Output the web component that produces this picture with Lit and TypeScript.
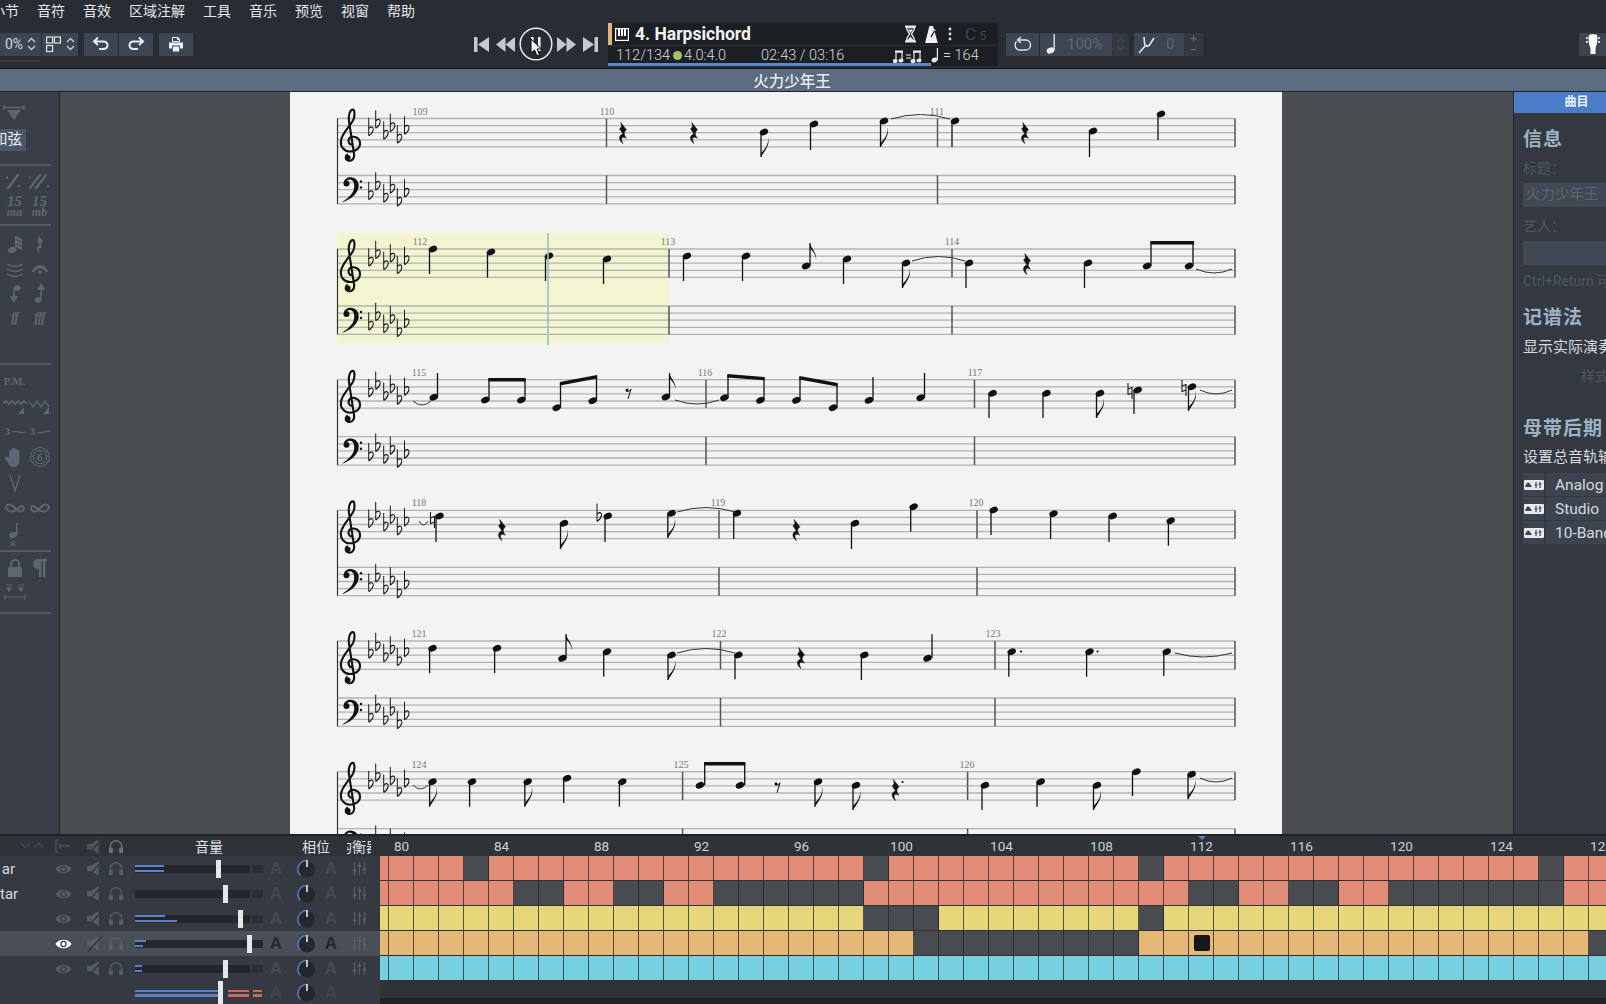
import { LitElement, html, css, svg } from "lit";
import { customElement } from "lit/decorators.js";

const UI_FONT = css`"Roboto", "Noto Sans CJK SC", sans-serif`;

// ---- score data, all in page pixels (the sheet svg has a matching viewBox) ----
// note: [headX, headY, stemX, stemEndY, 1 = flag]
type Note = [number, number, number, number, number?];
type Tie = [number, number, number, number];
interface System {
  top: number;
  labels: [string, number][];
  bars: number[];
  notes: Note[];
  rests?: [number, number][];
  rests8?: [number, number][];
  beams?: [number, number, number, number][];
  naturals?: [number, number][];
  flats?: [number, number][];
  dots?: [number, number][];
}

const SYSTEMS: System[] = [
  {
    top: 118.5,
    labels: [["109", 420], ["110", 607], ["111", 937]],
    bars: [606.5, 937.5],
    rests: [[623, 133], [694, 133], [1025, 133]],
    notes: [
      [764, 132, 761, 157, 1],
      [814, 124, 810.5, 150],
      [884, 121, 880.5, 147, 1],
      [955, 121, 952, 147],
      [1093, 131, 1089.5, 157],
      [1161, 114, 1158, 140],
    ],
  },
  {
    top: 249,
    labels: [["112", 420], ["113", 668], ["114", 952]],
    bars: [669, 952],
    rests: [[1027, 264]],
    beams: [[1151, 241, 1193.5, 241]],
    notes: [
      [433, 249, 429.5, 274],
      [491, 252, 487.5, 277.5],
      [549, 256, 545.5, 281],
      [607, 259, 603.5, 284],
      [687, 256, 683.5, 281],
      [746, 256, 742.5, 281],
      [806, 266, 810, 243, 1],
      [847, 259, 843.5, 284],
      [906, 263, 902.5, 288, 1],
      [969, 263, 966, 288],
      [1088, 263, 1084.5, 288],
      [1147, 266, 1151, 242],
      [1189, 266, 1193, 242],
    ],
  },
  {
    top: 379.7,
    labels: [["115", 419], ["116", 705], ["117", 975]],
    bars: [706, 974.5],
    rests8: [[629, 393]],
    beams: [
      [489, 378, 525, 378],
      [560.5, 382, 596.5, 375],
      [728, 374, 764, 377],
      [800, 376, 837, 383],
    ],
    naturals: [[1130, 391], [1184, 388]],
    notes: [
      [433.7, 397.3, 437.5, 373],
      [485.3, 400, 489, 379],
      [521.3, 400, 525, 379],
      [556.7, 407.7, 560.5, 383],
      [592.7, 400.7, 596.5, 376],
      [665.8, 397, 669.5, 373, 1],
      [724.4, 397.7, 728, 375],
      [760.4, 400.3, 764, 378],
      [796.4, 400.3, 800, 377],
      [833, 407.7, 837, 384],
      [869, 400.3, 873, 377],
      [920.6, 397.7, 924.5, 373],
      [992.6, 393.3, 989, 418],
      [1046.5, 393.3, 1043, 418],
      [1100, 393.3, 1096.5, 418, 1],
      [1137.7, 390, 1134, 414],
      [1192, 386.7, 1188.5, 411, 1],
    ],
  },
  {
    top: 510.3,
    labels: [["118", 419], ["119", 718], ["120", 976]],
    bars: [719, 977],
    rests: [[502, 530], [796.4, 530]],
    naturals: [[432.5, 520]],
    flats: [[599, 516.7]],
    notes: [
      [439.5, 516, 436, 542],
      [564, 523.3, 560.5, 549, 1],
      [607.8, 516, 605, 542],
      [671.6, 513.3, 667.8, 538, 1],
      [737, 513.3, 733.7, 539],
      [855, 523.3, 851.5, 549],
      [913.6, 506.7, 910.7, 531.7],
      [993.7, 510, 991, 535],
      [1053.5, 513.7, 1050.6, 539],
      [1112.7, 516, 1109, 542],
      [1170.7, 520.7, 1168.4, 545.7],
    ],
  },
  {
    top: 641,
    labels: [["121", 419], ["122", 719], ["123", 993]],
    bars: [720.5, 995],
    rests: [[801, 658]],
    dots: [[1021, 651.5], [1097.6, 651.5]],
    notes: [
      [432.5, 648.3, 429.6, 673],
      [497, 648.3, 494.6, 673],
      [562.5, 658.3, 566, 634, 1],
      [607, 651.7, 603.7, 676.7],
      [671.6, 655, 668, 680, 1],
      [738.4, 655, 735, 679.3],
      [864.3, 655, 861.4, 680],
      [927.5, 658.3, 932, 634.3],
      [1011.7, 651.7, 1008.8, 676.7],
      [1089.5, 651.7, 1086.6, 676.7],
      [1166.7, 651.7, 1163.8, 676],
    ],
  },
  {
    top: 771.7,
    labels: [["124", 419], ["125", 681], ["126", 967]],
    bars: [682.6, 967.6],
    rests: [[895.6, 790]],
    rests8: [[778, 786.7]],
    dots: [[902.6, 782]],
    beams: [[704.7, 762, 744.7, 762]],
    notes: [
      [432.5, 781.7, 429.6, 806.7, 1],
      [472, 781.7, 469.6, 806.7],
      [527.7, 781.7, 524.8, 806.7, 1],
      [567, 778.3, 563.7, 803],
      [622.3, 781.7, 619.4, 806.7],
      [700, 785.3, 704.7, 763],
      [740, 785.3, 744.7, 763],
      [818, 781.7, 815, 806.7, 1],
      [856, 785.3, 853, 810, 1],
      [985, 785.3, 982, 810],
      [1040.7, 781.7, 1037, 806.7],
      [1097, 785.3, 1093.5, 810, 1],
      [1136.5, 771.7, 1132.5, 796],
      [1191.7, 774.3, 1188, 799.3, 1],
    ],
  },
];

// ties that arch over the staff / ties that sag under it
const ARCHES: Tie[] = [
  [891, 119, 950, 119],
  [912, 261, 965, 261],
  [677, 512, 735, 512],
  [677, 653, 735, 653],
];
const SAGS: Tie[] = [
  [1196, 269, 1232, 269],
  [413, 401, 431, 401],
  [675, 400, 719, 400],
  [1200, 390, 1232, 390],
  [419, 521, 428, 521],
  [1175, 653, 1232, 653],
  [413, 785, 428, 785],
  [1200, 778, 1232, 778],
];

const KEY_X = [370.7, 377.7, 385.7, 392.3, 399.3, 406.5];
const TREBLE_KEY = [12.5, 5, 16, 8.5, 20, 11];
const BASS_KEY = [19.5, 10, 22, 13, 26, 17];

const flat = (x: number, y: number) => svg`
  <path transform="translate(${x} ${y}) scale(1 1.2)" d="M-2-11V4M-2-2C0-4.500 3-3.500 2.500-1C2 1 0 3-2 4"
    fill="none" stroke="#1a1a1a" stroke-width="1"/>`;

const natural = (x: number, y: number) => svg`
  <path d="M${x - 2} ${y - 8}V${y + 4}M${x + 2} ${y - 4}V${y + 8}M${x - 2} ${y - 2}L${x + 2} ${y - 3.5}M${x - 2} ${y + 3.5}L${x + 2} ${y + 2}"
    fill="none" stroke="#1a1a1a" stroke-width="1.1"/>`;

const trebleClef = (x: number, y: number) => svg`
  <g transform="translate(${x} ${y})" fill="none" stroke="#111" stroke-width="2.1">
    <path d="M2 5C-2 6-4 1-1-2C3-4 9-2 9 4C9 10 3 12-1 12C-7 12-11 7-10 1C-9-6-2-12 2-19C4-23 4-29 2-30C-1-30-3-24-2-18L3 14C4 20 0 22-3 21C-6 20-6 16-3 15"/>
    <circle cx="-3" cy="18" r="2.6" fill="#111" stroke="none"/>
  </g>`;

const bassClef = (x: number, y: number) => svg`
  <g transform="translate(${x} ${y})" fill="#111">
    <path d="M3 7C3 3 8 1 11 2C17 3 19 9 17 14C14 21 7 25 1 27C6 23 12 19 13 13C14 8 12 4 9 4C7 4 5 5 5 7Z"/>
    <circle cx="5.5" cy="8" r="3"/>
    <circle cx="20" cy="6" r="1.2"/>
    <circle cx="20" cy="12" r="1.2"/>
  </g>`;

const rest = (x: number, y: number) => svg`
  <path transform="translate(${x} ${y}) scale(1.15 1.05)" fill="#111" stroke="#111" stroke-width=".5"
    d="M-2-10L3-3C1-1 0 1 3 5C0 3-3 4 0 10C-4 7-4 2 0 1L-3-4C-1-5-1-7-2-10Z"/>`;

const rest8 = (x: number, y: number) => svg`
  <g transform="translate(${x} ${y})">
    <circle cx="-2" cy="-3" r="1.5" fill="#111"/>
    <path d="M-3-2C-1-1 1-2 2-4L-1 6" fill="none" stroke="#111" stroke-width="1"/>
  </g>`;

const noteShape = ([hx, hy, sx, end, mark]: Note) => {
  const up = end < hy;
  const flag =
    mark !== 1
      ? null
      : up
        ? svg`<path fill="#111" d="M${sx} ${end}C${sx + 1} ${end + 6} ${sx + 7} ${end + 9} ${sx + 6} ${end + 17}C${sx + 6} ${end + 11} ${sx + 2} ${end + 8} ${sx} ${end + 5}Z"/>`
        : svg`<path fill="#111" d="M${sx} ${end}C${sx + 5} ${end - 8} ${sx + 9} ${end - 12} ${sx + 7} ${end - 20}C${sx + 8} ${end - 13} ${sx + 4} ${end - 8} ${sx} ${end - 4}Z"/>`;
  return svg`
    <ellipse cx=${hx} cy=${hy} rx="4.4" ry="3.1" fill="#111" transform="rotate(-25 ${hx} ${hy})"/>
    <line x1=${sx} y1=${hy} x2=${sx} y2=${end} stroke="#111" stroke-width="1.3"/>
    ${flag}`;
};

@customElement("score-sheet")
class ScoreSheet extends LitElement {
  static override styles = css`
    :host {
      display: block;
      width: 992px;
      height: 100%;
      background: #f3f3f3;
      overflow: hidden;
    }
    svg {
      display: block;
    }
    text {
      font: 10px "Liberation Serif", serif;
      fill: #777;
      text-anchor: middle;
    }
  `;

  private staff(top: number, bars: number[]) {
    const lines = [0, 1, 2, 3, 4].map(
      (i) => svg`<line x1="337" x2="1235" y1=${top + i * 7.1} y2=${top + i * 7.1} stroke="#b2b2b2" stroke-width="1.3"/>`
    );
    const bottom = top + 28.4;
    return svg`${lines}
      ${[...bars, 1235].map(
        (x) => svg`<line x1=${x} x2=${x} y1=${top} y2=${bottom} stroke="#555" stroke-width="1.5"/>`
      )}`;
  }

  private system(s: System) {
    const bass = s.top + 57;
    return svg`
      ${this.staff(s.top, s.bars)}
      ${this.staff(bass, s.bars)}
      <line x1="337.5" x2="337.5" y1=${s.top} y2=${bass + 28.4} stroke="#333" stroke-width="1.2"/>
      ${trebleClef(351, s.top + 21)}
      ${bassClef(341, bass)}
      ${KEY_X.map((x, i) => flat(x, s.top + TREBLE_KEY[i]))}
      ${KEY_X.map((x, i) => flat(x, bass + BASS_KEY[i]))}
      ${s.labels.map(([t, x]) => svg`<text x=${x} y=${s.top - 4}>${t}</text>`)}
      ${s.notes.map(noteShape)}
      ${(s.rests ?? []).map(([x, y]) => rest(x, y))}
      ${(s.rests8 ?? []).map(([x, y]) => rest8(x, y))}
      ${(s.naturals ?? []).map(([x, y]) => natural(x, y))}
      ${(s.flats ?? []).map(([x, y]) => flat(x, y))}
      ${(s.dots ?? []).map(([x, y]) => svg`<circle cx=${x} cy=${y} r="1.1" fill="#111"/>`)}
      ${(s.beams ?? []).map(
        ([x1, y1, x2, y2]) =>
          svg`<polygon points="${x1 - 0.6},${y1} ${x2 + 0.6},${y2} ${x2 + 0.6},${y2 + 3.4} ${x1 - 0.6},${y1 + 3.4}" fill="#111"/>`
      )}`;
  }

  override render() {
    return html`<svg width="992" height="742" viewBox="290 92 992 742">
      <rect x="337" y="233" width="332" height="110" fill="#f2f5d0"/>
      ${SYSTEMS.map((s) => this.system(s))}
      ${ARCHES.map(([a, b, c, d]) => svg`<path d="M${a} ${b}Q${(a + c) / 2} ${b - 9} ${c} ${d}" fill="none" stroke="#333" stroke-width="1"/>`)}
      ${SAGS.map(([a, b, c, d]) => svg`<path d="M${a} ${b}Q${(a + c) / 2} ${b + 8} ${c} ${d}" fill="none" stroke="#333" stroke-width="1"/>`)}
      <rect x="547.2" y="233" width="1.6" height="112" fill="#8fc3d0"/>
    </svg>`;
  }
}

// ---- track mixer and pattern grid ----
const FIRST_BAR = 79;
const LAST_BAR = 128;
const range = (a: number, b: number) => Array.from({ length: b - a + 1 }, (_, i) => a + i);
const TRACK_GAPS: number[][] = [
  [83, 99, 110, 126],
  [85, 86, 89, 90, ...range(93, 98), 112, 113, 116, 117, ...range(120, 126)],
  [99, 100, 101, 110],
  [...range(101, 109), 128],
  [],
];
const TRACK_CLASS = ["salmon", "salmon", "yellow", "orange", "cyan"];

interface Track {
  name: string;
  l1: number;
  l2: number;
  handle: number;
}
const TRACKS: Track[] = [
  { name: "ar", l1: 29, l2: 29, handle: 83 },
  { name: "tar", l1: 0, l2: 0, handle: 90 },
  { name: "", l1: 30, l2: 42, handle: 105 },
  { name: "", l1: 11, l2: 8, handle: 114 },
  { name: "", l1: 7, l2: 7, handle: 90 },
];

const eyeIcon = svg`<svg viewBox="0 0 18 12" width="17" height="12"><path d="M0.5 6C4 0 14 0 17.5 6C14 12 4 12 0.5 6Z" fill="currentColor"/><circle cx="9" cy="6" r="3.4" fill="#3a3e45"/><circle cx="9" cy="6" r="2" fill="currentColor"/></svg>`;
const muteIcon = svg`<svg viewBox="0 0 16 16" width="17" height="17"><path d="M1 5.500H5L12 1V15L5 10.500H1Z" fill="currentColor"/><path d="M2 15.500L15 1" stroke="#33373e" stroke-width="1.300"/></svg>`;
const phonesIcon = svg`<svg viewBox="0 0 18 16" width="16" height="15"><path d="M2.500 11V8A6.500 6.500 0 0 1 15.500 8V11" fill="none" stroke="currentColor" stroke-width="1.500"/><rect x="1" y="9" width="4.500" height="6.500" rx="1.500" fill="currentColor"/><rect x="12.500" y="9" width="4.500" height="6.500" rx="1.500" fill="currentColor"/></svg>`;
const knobIcon = svg`<svg viewBox="0 0 20 20" width="20" height="20"><circle cx="10" cy="10.500" r="8" fill="#24272c"/><path d="M3.200 16.500A9 9 0 0 1 10 1.500" fill="none" stroke="#4f76b8" stroke-width="1.600"/><line x1="10" y1="1" x2="10" y2="8" stroke="#e8e8e8" stroke-width="1.600"/></svg>`;
const eqIcon = svg`<svg viewBox="0 0 16 16" width="15" height="15" fill="currentColor"><rect x="2" y="1" width="1.400" height="14"/><rect x="7.300" y="1" width="1.400" height="14"/><rect x="12.600" y="1" width="1.400" height="14"/><rect x="0.800" y="9" width="3.800" height="2.200"/><rect x="6.100" y="4" width="3.800" height="2.200"/><rect x="11.400" y="8" width="3.800" height="2.200"/></svg>`;

@customElement("track-mixer")
class TrackMixer extends LitElement {
  static override styles = css`
    :host {
      display: flex;
      height: 170px;
      background: #2f3237;
      border-top: 2px solid #1f2226;
      box-sizing: border-box;
      font-family: ${UI_FONT};
      overflow: hidden;
    }
    .mixer {
      width: 380px;
      flex: none;
      background: #353941;
    }
    .row {
      display: flex;
      align-items: center;
      height: 25px;
      color: #565c65;
    }
    .row > * {
      flex: none;
    }
    .header {
      height: 20px;
      background: #2f3237;
      color: #4d535b;
    }
    .selected {
      background: #4a4f57;
    }
    .master {
      height: 24px;
    }
    .name {
      width: 15px;
      margin-right: 35px;
      font-size: 15px;
      color: #d9dce0;
      text-align: right;
      white-space: nowrap;
    }
    .eye,
    .mute,
    .phones,
    .pan,
    .a1,
    .a2,
    .eq {
      display: flex;
      align-items: center;
      justify-content: center;
    }
    .eye {
      width: 26px;
    }
    .selected .eye {
      color: #fff;
    }
    .selected .mute,
    .selected .phones,
    .selected .eq {
      color: #5a6067;
    }
    .mute {
      width: 20px;
      margin-left: 8px;
    }
    .phones {
      width: 20px;
      margin-left: 2px;
    }
    .vol {
      position: relative;
      width: 128px;
      height: 8px;
      margin-left: 9px;
      background: linear-gradient(
        to right,
        #24272c 0 115px,
        transparent 115px 117px,
        #2b2e34 117px
      );
    }
    .selected .vol {
      background: #24272c;
    }
    .vol.bare {
      background: none;
    }
    .lvl {
      position: absolute;
      left: 0;
      height: 2.4px;
      background: #5a82c6;
    }
    .lvl.t {
      top: 0.5px;
    }
    .lvl.b {
      bottom: 0.5px;
    }
    .lvl.red {
      background: #c8695c;
    }
    .handle {
      position: absolute;
      top: -5px;
      width: 5px;
      height: 18px;
      margin-left: -2.5px;
      background: #e4e6e9;
    }
    .a1,
    .a2 {
      width: 26px;
      font: 700 17px "Liberation Sans", sans-serif;
      color: #454a52;
    }
    .a2 {
      width: 20px;
      margin-left: 4px;
    }
    .selected .a1,
    .selected .a2 {
      color: #24272c;
    }
    .master .a1,
    .master .a2 {
      color: #3f444c;
    }
    .pan {
      width: 20px;
      margin-left: 8px;
    }
    .eq {
      width: 20px;
      margin-left: 8px;
    }
    .header span {
      font-size: 14px;
      color: #dfe2e6;
      text-align: center;
      white-space: nowrap;
    }
    .h-vol {
      width: 128px;
      margin-left: 9px;
      margin-right: 26px;
      padding-left: 20px;
      box-sizing: border-box;
    }
    .h-pan {
      width: 44px;
      margin-left: 5px;
    }
    .h-eq {
      width: 24px;
      margin-left: 9px;
      overflow: hidden;
      display: flex;
      justify-content: center;
    }
    .h-eq span {
      flex: none;
    }
    .h-arrows {
      width: 50px;
      padding-left: 20px;
      box-sizing: border-box;
      display: flex;
    }
    .grid {
      flex: 1;
      overflow: hidden;
      position: relative;
    }
    .ruler,
    .track {
      display: flex;
    }
    .ruler {
      height: 20px;
      align-items: center;
      font-size: 13.5px;
      color: #cfd2d6;
    }
    .tick {
      flex: none;
      width: 25px;
      text-align: center;
    }
    .tick.first,
    .cell.first {
      width: 9px;
    }
    .track {
      height: 24px;
      margin-bottom: 1px;
    }
    .cell {
      flex: none;
      width: 25px;
      height: 24px;
      box-sizing: border-box;
      border-right: 1px solid rgba(30, 30, 36, 0.72);
    }
    .salmon {
      background: #e28d78;
    }
    .yellow {
      background: #e6d77b;
    }
    .orange {
      background: #e6b878;
    }
    .cyan {
      background: #76d0e0;
    }
    .gap {
      background: #484b50;
    }
    .playhead {
      position: absolute;
      left: 814px;
      top: 99px;
      width: 16px;
      height: 16px;
      border-radius: 2px;
      background: #171717;
    }
    .marker {
      position: absolute;
      left: 818px;
      top: 0;
      border: 4px solid transparent;
      border-top: 4px solid #5a82c6;
      border-bottom: 0;
    }
    .scroll {
      position: absolute;
      left: 0;
      right: 0;
      bottom: 0;
      height: 6px;
      background: #202327;
    }
  `;

  private trackRow(t: Track, i: number) {
    return html`<div class="row ${i === 3 ? "selected" : ""}">
      <div class="name">${t.name}</div>
      <div class="eye">${eyeIcon}</div>
      <div class="mute">${muteIcon}</div>
      <div class="phones">${phonesIcon}</div>
      <div class="vol">
        ${t.l1 ? html`<div class="lvl t" style="width:${t.l1}px"></div>` : ""}
        ${t.l2 ? html`<div class="lvl b" style="width:${t.l2}px"></div>` : ""}
        <div class="handle" style="left:${t.handle}px"></div>
      </div>
      <div class="a1">A</div>
      <div class="pan">${knobIcon}</div>
      <div class="a2">A</div>
      <div class="eq">${eqIcon}</div>
    </div>`;
  }

  override render() {
    const bars = range(FIRST_BAR, LAST_BAR);
    return html`
      <div class="mixer">
        <div class="row header">
          <div class="h-arrows">
            <svg width="24" height="10" viewBox="0 0 24 10" fill="none" stroke="#42474e" stroke-width="1.500"><path d="M1 2L5.500 7L10 2M14 7L18.500 2L23 7"/></svg>
          </div>
          <div class="eye">
            <svg width="16" height="14" viewBox="0 0 16 14" fill="none" stroke="#4d535b" stroke-width="1.300"><path d="M3 1H1V13H3M5 7H15M5 4V10"/></svg>
          </div>
          <div class="mute">${muteIcon}</div>
          <div class="phones" style="color:#6b727b">${phonesIcon}</div>
          <span class="h-vol">音量</span>
          <span class="h-pan">相位</span>
          <div class="h-eq"><span>均衡器</span></div>
        </div>
        ${TRACKS.map((t, i) => this.trackRow(t, i))}
        <div class="row master">
          <div class="name"></div>
          <div class="eye"></div>
          <div class="mute"></div>
          <div class="phones"></div>
          <div class="vol bare">
            <div class="lvl t" style="width:85px"></div>
            <div class="lvl b" style="width:85px"></div>
            <div class="lvl t red" style="left:93px;width:21px"></div>
            <div class="lvl b red" style="left:93px;width:21px"></div>
            <div class="lvl t red" style="left:118px;width:9px"></div>
            <div class="lvl b red" style="left:118px;width:9px"></div>
            <div class="handle" style="left:85px;top:-8px;height:24px"></div>
          </div>
          <div class="a1">A</div>
          <div class="pan">${knobIcon}</div>
          <div class="a2">A</div>
        </div>
      </div>
      <div class="grid">
        <div class="ruler">
          ${bars.map(
            (b) => html`<div class="tick ${b === FIRST_BAR ? "first" : ""}">${b % 4 === 0 ? b : ""}</div>`
          )}
        </div>
        ${TRACK_GAPS.map(
          (gaps, t) => html`<div class="track">
            ${bars.map(
              (b) => html`<div class="cell ${b === FIRST_BAR ? "first" : ""} ${gaps.includes(b) ? "gap" : TRACK_CLASS[t]}"></div>`
            )}
          </div>`
        )}
        <div class="marker"></div>
        <div class="playhead"></div>
        <div class="scroll"></div>
      </div>
    `;
  }
}

// ---- left tool palette icons ----
const tool = (body: unknown) => svg`<svg viewBox="0 0 24 24" width="24" height="24" fill="currentColor" stroke="none">${body}</svg>`;
const noteGlyph = (extra: unknown = null) => svg`<ellipse cx="9" cy="18" rx="4" ry="3" transform="rotate(-20 9 18)"/><rect x="12" y="4" width="1.500" height="14"/>${extra}`;
const tripletMark = svg`<text x="2" y="15" font-family="Liberation Serif, serif" font-size="10" font-weight="700">3</text>`;

const TOOLS_A = [
  tool(svg`<path d="M5 18L15 5M4 7.500h.01M16 16h.01" stroke="currentColor" stroke-width="2.400" stroke-linecap="round"/>`),
  tool(svg`<path d="M2 18L12 5M8 18L18 5M2 7.500h.01M20 16h.01" stroke="currentColor" stroke-width="2.200" stroke-linecap="round"/>`),
];
const TOOLS_B = [
  tool(noteGlyph(svg`<path d="M13 4L19 7V10L13 7ZM13 8L19 11V14L13 11ZM13 12L19 15V18L13 15Z"/>`)),
  tool(svg`<g transform="translate(12 12) scale(.95)"><path d="M-2-10L3-3C1-1 0 1 3 5C0 3-3 4 0 10C-4 7-4 2 0 1L-3-4C-1-5-1-7-2-10Z"/></g>`),
  tool(svg`<path d="M4 7Q12 12 20 7M4 12Q12 17 20 12M4 17Q12 22 20 17" fill="none" stroke="currentColor" stroke-width="1.300"/>`),
  tool(svg`<path d="M4 15C6 6 18 6 20 15L18 15C15 10 9 10 6 15Z"/><circle cx="12" cy="15" r="1.800"/>`),
  tool(svg`<ellipse cx="14" cy="7" rx="3.500" ry="2.800"/><path d="M11 7V18" stroke="currentColor" stroke-width="1.500"/><path d="M7 15L11 22L15 15Z"/>`),
  tool(svg`<ellipse cx="10" cy="19" rx="3.500" ry="2.800"/><path d="M13 19V8" stroke="currentColor" stroke-width="1.500"/><path d="M9 9L13 2L17 9Z"/>`),
];
const TOOLS_C_WAVE = [
  tool(svg`<path d="M0 9L3 7L6 10L9 7L12 10L15 7L18 10L21 7L24 10" fill="none" stroke="currentColor" stroke-width="1.600"/><path d="M15 20L21 13V20Z"/>`),
  tool(svg`<path d="M1 7L5 13L9 7L13 13L17 7L21 13" fill="none" stroke="currentColor" stroke-width="1.300"/><path d="M15 20L21 13V20Z"/>`),
  tool(svg`${tripletMark}<path d="M9 12C13 10 17 14 23 12" fill="none" stroke="currentColor" stroke-width="1.200"/>`),
  tool(svg`${tripletMark}<path d="M9 13C13 14 18 10 23 11" fill="none" stroke="currentColor" stroke-width="1.200"/>`),
];
const handIcon = tool(svg`<path d="M6 11V6a1.300 1.300 0 0 1 2.600 0V10V4a1.300 1.300 0 0 1 2.600 0V10V4.500a1.300 1.300 0 0 1 2.600 0V10V6a1.300 1.300 0 0 1 2.600 0V16C16.400 20 14 22 11 22C8 22 6 20 5 18L2 13C2 11 4 11 5 13Z"/>`);
const ringIcon = tool(svg`<circle cx="12" cy="12" r="9.500" fill="none" stroke="currentColor" stroke-width="1.100"/><circle cx="12" cy="12" r="6.800" fill="none" stroke="currentColor" stroke-width="1"/><path d="M14 9C10 8.500 9.500 13 10 14.500C11 16 14 15.500 14 13.500C14 11.500 11 11.500 10 13.500" fill="none" stroke="currentColor" stroke-width="1.100"/>`);
const vIcon = tool(svg`<path d="M7 4L12 20L17 4" fill="none" stroke="currentColor" stroke-width="1.400"/>`);
const turn = tool(svg`<path d="M3 11C5 7 8 8 12 12C16 16 19 17 21 13C21 10 19 9 17 11C13 15 10 17 6 15C4 14 3 13 3 11Z" fill="none" stroke="currentColor" stroke-width="1.800"/>`);
const turnRev = tool(svg`<g transform="matrix(-1 0 0 1 24 0)"><path d="M3 11C5 7 8 8 12 12C16 16 19 17 21 13C21 10 19 9 17 11C13 15 10 17 6 15C4 14 3 13 3 11Z" fill="none" stroke="currentColor" stroke-width="1.800"/></g>`);
const graceIcon = tool(svg`<ellipse cx="10" cy="13" rx="4" ry="3" transform="rotate(-20 10 13)"/><rect x="13" y="1" width="1.500" height="12"/><path d="M7 20L13 24M13 20L7 24M10 18.500V24" stroke="currentColor" stroke-width="1"/>`);
const lockIcon = tool(svg`<path d="M8 11V8a4 4 0 0 1 8 0V11" fill="none" stroke="currentColor" stroke-width="2"/><rect x="5" y="11" width="14" height="10" rx="1"/>`);
const pilcrowIcon = tool(svg`<path d="M10 3H19V5.500H17.500V21H15V5.500H13.500V21H11V13C6.500 13 5 10.500 5 8C5 5 7 3 10 3Z"/>`);
const staffIcon = tool(svg`<path d="M3 5H9M15 5H21M4 8H8L6 11ZM16 8H20L18 11ZM2 14V20M22 14V20M2 17H22" stroke="currentColor" stroke-width="1.100"/>`);

const UNDO = svg`<svg width="18" height="16" viewBox="0 0 18 16" fill="none" stroke="#e8eaed" stroke-width="2"><path d="M6 1.500L2 5.500L6 9M2 5.500H11C17 5.500 17 13 11 13H7"/></svg>`;
const REDO = svg`<svg width="18" height="16" viewBox="0 0 18 16" fill="none" stroke="#e8eaed" stroke-width="2"><path d="M12 1.500L16 5.500L12 9M16 5.500H7C1 5.500 1 13 7 13H11"/></svg>`;
const PRINT = svg`<svg width="16" height="15" viewBox="0 0 16 15" fill="#f0f1f3"><path d="M4 0H10L12 2V5H4ZM5 1V4H11V3H9V1Z" fill-rule="evenodd"/><path d="M1 5.500H15V11.500H12V8.500H4V11.500H1Z"/><rect x="4.800" y="9.500" width="6.400" height="5"/></svg>`;
const updown = (color: string) => svg`<svg width="9" height="14" viewBox="0 0 9 14" fill="none" stroke=${color} stroke-width="1.300"><path d="M1 5L4.500 1.500L8 5M1 9L4.500 12.500L8 9"/></svg>`;
const LOOP = svg`<svg width="20" height="16" viewBox="0 0 20 16" fill="none" stroke="#dfe2e6" stroke-width="1.400"><path d="M8 1L4.500 4L8 7M4.500 4H13C19 4 19 14 13 14H7C2 14 1 8 3.500 5.500"/></svg>`;
const NOTE_WHITE = svg`<svg width="12" height="20" viewBox="0 0 12 20" fill="#eceef0"><ellipse cx="4.500" cy="16.500" rx="4" ry="3" transform="rotate(-20 4.500 16.500)"/><rect x="7.500" y="0" width="1.300" height="16"/></svg>`;
const FORK = svg`<svg width="18" height="20" viewBox="0 0 18 20" fill="none" stroke="#e4e6e9" stroke-width="1.600"><path d="M1 19L8 11M6 3L6.500 9C6.500 12 10 13 11.500 11L16 4"/></svg>`;
const GUITAR = svg`<svg width="16" height="20" viewBox="0 0 16 20" fill="#fff"><path d="M4 1C6 0 10 0 12 1C13 5 12 11 10.500 14V20H5.500V14C4 11 3 5 4 1Z"/><path d="M1 4h2M1 8h2M13 4h2M13 8h2" stroke="#fff" stroke-width="1.500"/></svg>`;
const PIANO = svg`<svg width="14" height="13" viewBox="0 0 14 13"><rect x=".6" y=".6" width="12.800" height="11.800" fill="none" stroke="#fff" stroke-width="1.200"/><path d="M3 1V8H5V1ZM6 1V8H8V1ZM9 1V8H11V1Z" fill="#fff"/></svg>`;
const HOURGLASS = svg`<svg width="13" height="18" viewBox="0 0 13 17"><path d="M1 1H12M1 16H12" stroke="#e8eaed" stroke-width="1.800"/><path d="M2.500 2H10.500C10.500 5 8 7 7.500 8.500C8 10 10.500 12 10.500 15H2.500C2.500 12 5 10 5.500 8.500C5 7 2.500 5 2.500 2Z" fill="none" stroke="#e8eaed" stroke-width="1.300"/><path d="M4 4H9L6.500 7.500ZM3.800 14.500L6.500 11L9.200 14.500Z" fill="#e8eaed"/></svg>`;
const METRONOME = svg`<svg width="16" height="19" viewBox="0 0 15 18" fill="#f0f1f3"><path d="M5 1H8.500L13 17H1ZM7 12L11 4.500L10 4L6.200 11Z" fill-rule="evenodd"/></svg>`;
const DOTS = svg`<svg width="4" height="14" viewBox="0 0 4 14" fill="#dfe2e6"><circle cx="2" cy="2" r="1.400"/><circle cx="2" cy="7" r="1.400"/><circle cx="2" cy="12" r="1.400"/></svg>`;
const SWING = svg`<svg width="30" height="14" viewBox="0 0 30 14" fill="none" stroke="#e8eaed" stroke-width="1.200"><path d="M3 12V3H9V11M21 12V3H27V11"/><path d="M2 2.500H10M20 2.500H28" stroke-width="2"/><ellipse cx="2" cy="12" rx="2" ry="1.500" fill="#e8eaed"/><ellipse cx="8" cy="11.500" rx="2" ry="1.500" fill="#e8eaed"/><ellipse cx="20" cy="12" rx="2" ry="1.500" fill="#e8eaed"/><ellipse cx="26" cy="11.500" rx="2" ry="1.500" fill="#e8eaed"/><path d="M13 6H18M13 9H18" stroke-width="1"/></svg>`;
const TEMPO_NOTE = svg`<svg width="10" height="15" viewBox="0 0 10 15" fill="#eceef0"><ellipse cx="3.500" cy="12" rx="3" ry="2.300" transform="rotate(-20 3.500 12)"/><rect x="5.800" y="0" width="1.200" height="12"/></svg>`;
const FX_ICON = svg`<svg width="20" height="12" viewBox="0 0 20 12"><rect width="20" height="10" y="1" fill="#e8eaed" rx="1"/><path d="M1 8C3 2 5 2 8 8Z" fill="#3d444f"/><path d="M12 3V9M16 3V9" stroke="#3d444f" stroke-width="1.200"/><path d="M10.500 6H13.500M14.500 5H17.500" stroke="#3d444f"/></svg>`;
const TRANSPORT = svg`<svg width="124" height="44" viewBox="474 21 124 44" fill="#c4c8d0">
  <rect x="474" y="36" width="3.500" height="15"/><path d="M489 36V51L478 43.500Z"/>
  <path d="M505.500 36V51L496 43.500ZM515 36V51L505.500 43.500Z"/>
  <circle cx="536" cy="43" r="15.800" fill="none" stroke="#eceef0" stroke-width="1.500"/>
  <rect x="531" y="36" width="2.600" height="14" fill="#eceef0"/><rect x="538" y="36" width="2.600" height="14" fill="#eceef0"/>
  <path d="M557 36V51L566.500 43.500ZM566.500 36V51L576 43.500Z"/>
  <path d="M583 36V51L594 43.500Z"/><rect x="594.500" y="36" width="3.500" height="15"/>
</svg>`;

@customElement("app-root")
export class AppRoot extends LitElement {
  static override styles = css`
    :host {
      display: block;
      width: 1606px;
      height: 1004px;
      overflow: hidden;
      background: #282c33;
      font-family: ${UI_FONT};
      color: #e5e7ea;
      position: relative;
    }
    .top {
      height: 68px;
      background: #282c33;
      border-bottom: 1px solid #14161a;
    }
    .menu {
      display: flex;
      gap: 18px;
      height: 22px;
      box-sizing: border-box;
      padding-bottom: 2px;
      align-items: center;
      margin-left: -9px;
      font-size: 14px;
      white-space: nowrap;
    }
    .tools {
      display: flex;
      align-items: center;
      height: 44px;
    }
    .tools > * {
      flex: none;
    }
    .btn {
      display: flex;
      align-items: center;
      justify-content: center;
      height: 23px;
      background: #3d4553;
      box-sizing: border-box;
    }
    .group {
      display: flex;
      gap: 1px;
      background: #282c33;
    }
    .zoom {
      width: 41px;
      justify-content: flex-end;
      gap: 4px;
      padding-right: 5px;
      font-size: 14px;
      color: #d3d6da;
    }
    .layout {
      width: 36px;
      gap: 5px;
    }
    .quad {
      width: 15px;
      height: 17px;
    }
    .undo-group {
      margin-left: 6px;
    }
    .undo-group .btn {
      width: 34px;
    }
    .print {
      width: 34px;
      margin-left: 6px;
    }
    .transport {
      margin-left: 281px;
      width: 124px;
      height: 44px;
    }
    .transport svg {
      display: block;
    }
    .info {
      position: relative;
      width: 390px;
      height: 43px;
      margin-left: 10px;
      margin-top: 1px;
      background: #1b1e23;
      border-radius: 2px;
    }
    .info-top {
      display: flex;
      align-items: center;
      height: 22px;
      border-bottom: 1px solid #2b2e33;
    }
    .strip {
      width: 4px;
      height: 22px;
      background: #e0b678;
      margin-right: 3px;
    }
    .info-title {
      margin-left: 6px;
      width: 269px;
      font-size: 17.5px;
      font-weight: 700;
      color: #f2f3f5;
      white-space: nowrap;
    }
    .meter {
      margin-left: 7px;
      display: flex;
    }
    .dots {
      margin-left: 8px;
      margin-right: 13px;
      display: flex;
    }
    .key {
      color: #3f434a;
      font-size: 17px;
    }
    .key small {
      font-size: 13px;
    }
    .info-bottom {
      display: flex;
      align-items: center;
      height: 19px;
      padding-left: 8px;
      font-size: 14.5px;
      font-weight: 300;
      color: #d8dbdf;
      white-space: nowrap;
    }
    .pos {
      width: 57px;
    }
    .ok {
      width: 9px;
      height: 9px;
      border-radius: 50%;
      background: #9bc46a;
      margin-right: 2px;
    }
    .sig {
      width: 77px;
    }
    .time {
      width: 132px;
    }
    .swing {
      margin-right: 8px;
      display: flex;
    }
    .tempo {
      display: flex;
      align-items: center;
      gap: 2px;
    }
    .progress {
      position: absolute;
      left: 0;
      bottom: 0;
      width: 323px;
      height: 3px;
      background: #5a86d0;
    }
    .loop {
      width: 33px;
      margin-left: 8px;
    }
    .speed {
      width: 72px;
      margin-left: 1px;
      gap: 9px;
      justify-content: flex-start;
      padding-left: 6px;
      font-size: 15px;
      color: #5f6774;
    }
    .spin {
      width: 17px;
      background: #333840;
    }
    .transpose {
      width: 50px;
      margin-left: 5px;
      gap: 10px;
      justify-content: flex-start;
      padding-left: 4px;
      font-size: 15px;
      color: #5f6774;
    }
    .plusminus {
      width: 19px;
      background: #333840;
      flex-direction: column;
      font-size: 13px;
      line-height: 11px;
      color: #5f6774;
    }
    .guitar {
      width: 27px;
      margin-left: auto;
    }
    .zoom-rail {
      position: absolute;
      left: 0;
      top: 60px;
      width: 41px;
      height: 2px;
      background: #33373e;
    }
    .title {
      display: flex;
      align-items: center;
      justify-content: center;
      height: 22px;
      background: #5b6b80;
      border-bottom: 1px solid #1f2329;
      font-size: 15.5px;
      font-weight: 500;
      color: #e6e9ec;
    }
    .title span {
      margin-right: 22px;
    }
    .main {
      display: flex;
      height: 742px;
      background: #4a4e52;
    }
    .palette {
      flex: none;
      width: 59px;
      background: #3a3f47;
      border-right: 1px solid #23262b;
      color: #5f6671;
      overflow: hidden;
    }
    .pal-top {
      display: flex;
      justify-content: flex-start;
      padding: 11px 0 0 2px;
      height: 24px;
    }
    .chord {
      width: 26px;
      height: 22px;
      box-sizing: border-box;
      padding-right: 4px;
      margin-top: 2px;
      margin-bottom: 13px;
      background: #4b5666;
      color: #eef0f2;
      font-size: 14.5px;
      line-height: 22px;
      text-align: right;
      white-space: nowrap;
      overflow: hidden;
      direction: rtl;
    }
    .rule {
      height: 2px;
      width: 51px;
      background: #545a63;
    }
    .tool-grid {
      display: grid;
      grid-template-columns: 25px 25px;
      padding-left: 2px;
      justify-items: center;
      align-items: center;
    }
    .tool-grid svg {
      display: block;
    }
    .a {
      grid-auto-rows: 24px;
      margin-top: 4px;
      margin-bottom: 6px;
    }
    .b {
      grid-auto-rows: 24.5px;
      margin-top: 6px;
      margin-bottom: 33px;
    }
    .c {
      grid-auto-rows: 25.5px;
      margin-top: 3px;
      margin-bottom: 3px;
    }
    .d {
      grid-auto-rows: 24px;
      margin-top: 4px;
      margin-bottom: 8px;
    }
    .mark {
      font: italic 700 15px/12px "Liberation Serif", serif;
      text-align: center;
    }
    .mark small {
      display: block;
      font-size: 12px;
      line-height: 10px;
    }
    .pm {
      font: 700 11px "Liberation Serif", serif;
    }
    .ff {
      font: italic 700 14px "Liberation Serif", serif;
      letter-spacing: -1px;
    }
    .canvas {
      flex: 1;
      display: flex;
      justify-content: center;
      padding-right: 1px;
    }
    .side {
      flex: none;
      width: 93px;
      background: #343941;
      border-left: 1px solid #23262b;
      box-sizing: border-box;
      overflow: hidden;
      font-size: 15px;
      white-space: nowrap;
    }
    .side-tab {
      height: 21px;
      box-sizing: border-box;
      padding-left: 33px;
      background: #4a7cc7;
      font-size: 12px;
      font-weight: 700;
      line-height: 21px;
      text-align: center;
      color: #eef3fb;
    }
    .side-body {
      padding-left: 9px;
    }
    h3 {
      margin: 0;
      font-size: 19px;
      font-weight: 700;
      line-height: 24px;
      color: #9db3c6;
      letter-spacing: 1px;
    }
    .dim {
      color: #50565f;
      font-size: 14px;
      line-height: 18px;
    }
    .field {
      height: 24px;
      background: #434954;
      color: #5d6570;
      font-size: 14.5px;
      line-height: 24px;
      padding-left: 3px;
    }
    .note {
      color: #d7dade;
      line-height: 18px;
    }
    .fx {
      display: flex;
      height: 23px;
      margin-bottom: 1px;
      font-size: 15.5px;
      line-height: 24px;
      color: #d7dade;
    }
    .fx-icon {
      flex: none;
      width: 21px;
      background: #3d444f;
      margin-right: 2px;
      display: flex;
      align-items: center;
      justify-content: center;
    }
    .fx-name {
      flex: 1;
      background: #3d444f;
      padding-left: 9px;
    }
    .cursor {
      position: absolute;
      left: 530px;
      top: 38px;
    }
    .mt6 { margin-top: 6px; }
    .mt7 { margin-top: 7px; }
    .mt8 { margin-top: 8px; }
    .mt10 { margin-top: 10px; }
    .mt11 { margin-top: 11px; }
    .mt15 { margin-top: 15px; }
    .mt16 { margin-top: 16px; }
    .mt32 { margin-top: 32px; }
    .style-label { padding-left: 58px; }
  `;

  private paletteA() {
    return html`<div class="tool-grid a">
      ${TOOLS_A}
      <div class="mark">15<small>ma</small></div>
      <div class="mark">15<small>mb</small></div>
    </div>`;
  }

  private paletteB() {
    return html`<div class="tool-grid b">
      ${TOOLS_B}
      <div class="ff">ff</div>
      <div class="ff">fff</div>
    </div>`;
  }

  private paletteC() {
    return html`<div class="tool-grid c">
      <div class="pm">P.M.</div>
      <div></div>
      ${TOOLS_C_WAVE[0]}${TOOLS_C_WAVE[1]}
      ${TOOLS_C_WAVE[2]}${TOOLS_C_WAVE[3]}
      ${handIcon}${ringIcon}
      ${vIcon}<div></div>
      ${turn}${turnRev}
      ${graceIcon}<div></div>
    </div>`;
  }

  override render() {
    return html`
      <div class="top">
        <div class="menu">
          ${["小节", "音符", "音效", "区域注解", "工具", "音乐", "预览", "视窗", "帮助"].map(
            (m) => html`<span>${m}</span>`
          )}
        </div>
        <div class="tools">
          <div class="group">
            <div class="btn zoom"><span>0%</span>${updown("#c9cdd3")}</div>
            <div class="btn layout">
              <svg class="quad" viewBox="0 0 15 17" fill="none" stroke="#e0e2e6" stroke-width="1.200"><rect x=".6" y="1" width="6" height="6"/><rect x="8.400" y="1" width="6" height="6"/><rect x=".6" y="9.500" width="6" height="6"/></svg>
              ${updown("#c9cdd3")}
            </div>
          </div>
          <div class="group undo-group">
            <div class="btn">${UNDO}</div>
            <div class="btn">${REDO}</div>
          </div>
          <div class="btn print">${PRINT}</div>
          <div class="transport">${TRANSPORT}</div>
          <div class="info">
            <div class="info-top">
              <div class="strip"></div>
              ${PIANO}
              <div class="info-title">4. Harpsichord</div>
              ${HOURGLASS}
              <span class="meter">${METRONOME}</span>
              <span class="dots">${DOTS}</span>
              <span class="key">C<small> 5</small></span>
            </div>
            <div class="info-bottom">
              <span class="pos">112/134</span>
              <span class="ok"></span>
              <span class="sig">4.0:4.0</span>
              <span class="time">02:43 / 03:16</span>
              <span class="swing">${SWING}</span>
              <span class="tempo">${TEMPO_NOTE}= 164</span>
            </div>
            <div class="progress"></div>
          </div>
          <div class="btn loop">${LOOP}</div>
          <div class="btn speed">${NOTE_WHITE}<span>100%</span></div>
          <div class="btn spin">${updown("#444a52")}</div>
          <div class="btn transpose">${FORK}<span>0</span></div>
          <div class="btn plusminus"><span>+</span><span>−</span></div>
          <div class="btn guitar">${GUITAR}</div>
        </div>
      </div>
      <div class="zoom-rail"></div>
      <div class="title"><span>火力少年王</span></div>
      <div class="main">
        <div class="palette">
          <div class="pal-top">
            <svg width="24" height="24" viewBox="0 0 24 24" fill="currentColor"><path d="M2 2V7M22 2V7M2 4.500H22" stroke="currentColor" stroke-width="1.500"/><path d="M5 7H19L12 17Z"/></svg>
          </div>
          <div class="chord">和弦</div>
          <div class="rule"></div>
          ${this.paletteA()}
          <div class="rule"></div>
          ${this.paletteB()}
          <div class="rule"></div>
          ${this.paletteC()}
          <div class="rule"></div>
          <div class="tool-grid d">
            ${lockIcon}${pilcrowIcon}
            ${staffIcon}<div></div>
          </div>
          <div class="rule"></div>
        </div>
        <div class="canvas"><score-sheet></score-sheet></div>
        <div class="side">
          <div class="side-tab">曲目</div>
          <div class="side-body">
            <h3 class="mt15">信息</h3>
            <div class="dim mt7">标题：</div>
            <div class="field mt6">火力少年王</div>
            <div class="dim mt10">艺人：</div>
            <div class="field mt6"></div>
            <div class="dim mt7">Ctrl+Return 可</div>
            <h3 class="mt16">记谱法</h3>
            <div class="note mt8">显示实际演奏</div>
            <div class="dim mt11 style-label">样式</div>
            <h3 class="mt32">母带后期</h3>
            <div class="note mt7">设置总音轨输</div>
            <div class="mt7">
              <div class="fx"><div class="fx-icon">${FX_ICON}</div><div class="fx-name">Analog</div></div>
              <div class="fx"><div class="fx-icon">${FX_ICON}</div><div class="fx-name">Studio</div></div>
              <div class="fx"><div class="fx-icon">${FX_ICON}</div><div class="fx-name">10-Band</div></div>
            </div>
          </div>
        </div>
      </div>
      <track-mixer></track-mixer>
      <svg class="cursor" width="12" height="19" viewBox="0 0 12 19"><path d="M1 1V15L4.500 12L7 18L9.500 17L7 11H11.500Z" fill="#fff" stroke="#000" stroke-width="1"/></svg>
    `;
  }
}
